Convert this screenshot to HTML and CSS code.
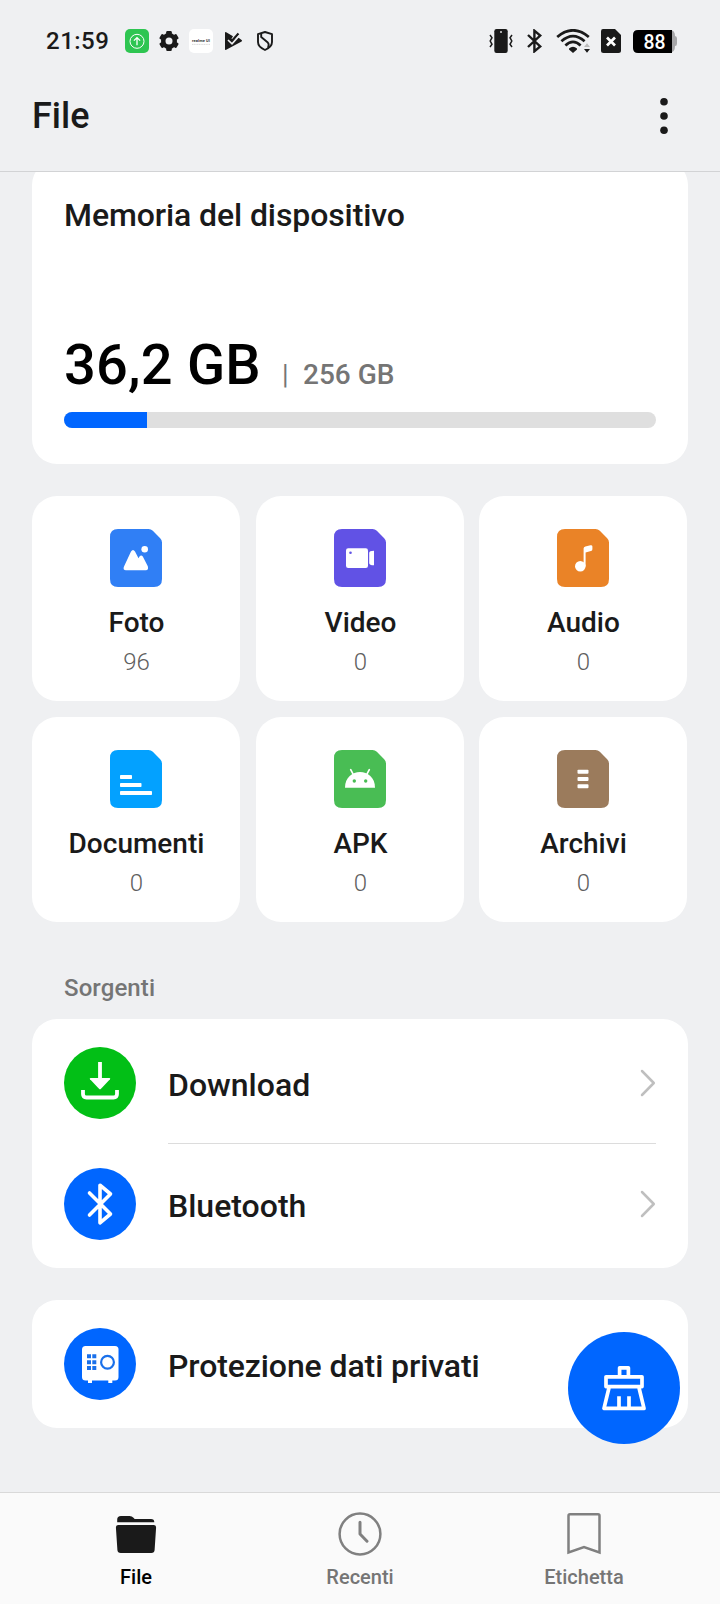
FILE: index.html
```html
<!DOCTYPE html>
<html lang="it">
<head>
<meta charset="utf-8">
<title>File</title>
<link rel="stylesheet" href="styles.css">
</head>
<body>
<div class="app">
  <header class="header">
    <div class="status">
      <span class="time">21:59</span>
      <svg class="ic" viewBox="0 0 24 24"><rect width="24" height="24" rx="5" fill="#2ec551"/><g fill="none" stroke="#fff"><circle cx="12" cy="12.3" r="7" stroke-width="1"/><path d="M12 16.3V9M8.9 11.6 12 8.6l3.1 3" stroke-width="1.3"/></g></svg>
      <svg class="ic" viewBox="0 0 24 24"><g fill="#1a1a1a"><circle cx="12" cy="12" r="8"/><rect x="9.2" y="2.1" width="5.6" height="19.8" rx="1.2"/><rect x="9.2" y="2.1" width="5.6" height="19.8" rx="1.2" transform="rotate(60 12 12)"/><rect x="9.2" y="2.1" width="5.6" height="19.8" rx="1.2" transform="rotate(120 12 12)"/></g><circle cx="12" cy="12" r="3.5" fill="#eff0f2"/></svg>
      <svg class="ic" viewBox="0 0 24 24"><rect width="24" height="24" rx="5" fill="#fff"/><text x="3" y="13.2" class="brand" textLength="18">realme UI</text><path d="M3 15.4h18" stroke="#ccc" stroke-width=".7" stroke-dasharray="1.2 .5"/></svg>
      <svg class="ic" viewBox="0 0 24 24"><path d="M4 4q0-1.300 1.200-.7L12 7.200l-1.500 2.600L12 11l5.300-2.600 3.300 2.500q1 .9 0 1.700L5.200 20.800Q4 21.400 4 20z" fill="#1a1a1a"/><path d="m10.800 12 6.700-7.600" fill="none" stroke="#1a1a1a" stroke-width="2.200"/><path d="m7 11 4 3.800 8-8.800" fill="none" stroke="#eff0f2" stroke-width="1.700"/></svg>
      <svg class="ic" viewBox="0 0 24 24"><g fill="none" stroke="#1a1a1a" stroke-width="1.9" stroke-linejoin="round"><path d="M12 3 19 5.2V13q0 4.800-7 8-7-3.200-7-8V5.2z"/><path d="M8.2 4.500V8l6.600 5.500q1.700 2 .2 5.400"/></g></svg>
      <span class="spacer"></span>
      <svg class="ic" viewBox="0 0 24 24"><rect x="5.300" width="13.400" height="24" rx="2.200" fill="#1a1a1a"/><rect x="11" y="2" width="2" height="2" fill="#aaa"/><path d="m1 6 2 2.700L1.200 12 3 15.300l-2 2.700M23 6l-2 2.700 1.800 3.300-1.800 3.300 2 2.700" fill="none" stroke="#1a1a1a" stroke-width="1.500"/></svg>
      <svg class="ic bt" viewBox="0 0 24 24"><path d="m6 6 12.200 11.500L12.400 22.300V1.700l5.800 4.800L6 18" fill="none" stroke="#1a1a1a" stroke-width="2.400"/></svg>
      <svg class="ic wifi" viewBox="0 0 36 24"><g fill="none" stroke="#1a1a1a" stroke-width="2.700"><path d="M1.200 8Q17 -5.400 32.800 8"/><path d="M5.400 12.300Q17 2 28.600 12.300"/><path d="M9.400 16.400Q17 9.200 24.600 16.400"/></g><path d="M13 19.400q4-3.400 8 0v1.200L17 24l-4-3.400z" fill="#1a1a1a"/><path d="m28 18 3-3.700 3 3.700z" fill="#bbb"/><path d="M28 20h6l-3 3.700z" fill="#1a1a1a"/></svg>
      <svg class="ic sim" viewBox="0 0 24 24"><path d="M4 0h12l6 6v15.500Q22 24 19.500 24h-15Q2 24 2 21.500V2.300Q2 0 4 0z" fill="#1a1a1a"/><path d="m8 8.500 8 8m0-8-8 8" stroke="#fff" stroke-width="2.700"/></svg>
      <svg class="battery" viewBox="0 0 44 24"><path d="M36 1h1q5 0 5 6 2 0 2 2.500v5Q44 17 42 17q0 6.500-5 6.500h-1z" fill="#a6a6a8"/><path d="M5 1h34v23H5q-5 0-5-5V6q0-5 5-5z" fill="#000"/><text x="10.500" y="19.800" class="charge" textLength="22" lengthAdjust="spacingAndGlyphs">88</text></svg>
    </div>
    <div class="titlebar">
      <h1>File</h1>
      <svg class="more" viewBox="0 0 8 38"><g fill="#1a1a1a"><circle cx="4" cy="4.700" r="3.800"/><circle cx="4" cy="19" r="3.800"/><circle cx="4" cy="33.300" r="3.800"/></g></svg>
    </div>
  </header>

  <main class="content">
    <section class="card storage">
      <h2>Memoria del dispositivo</h2>
      <div class="size"><strong>36,2 GB</strong><span class="bar-sep">|</span><span class="total">256 GB</span></div>
      <div class="meter"><div class="used"></div></div>
    </section>

    <section class="grid">
      <div class="card tile"><svg class="doc photo" viewBox="0 0 52 58"><path d="M8 0h30.500q2.500 0 4.300 1.800l7.400 7.400Q52 11 52 13.500V50q0 8-8 8H8q-8 0-8-8V8q0-8 8-8z"/><g fill="#fff"><circle cx="34.700" cy="20.300" r="3.300"/><path d="M14 37.500 21 22.600q2-3.300 4 0l3.500 6.600 1-1.700q1.700-2 3.300 0l5 9.800q1 4-2 4H16q-3.500-.2-2-3.800z"/></g></svg><b>Foto</b><span>96</span></div>
      <div class="card tile"><svg class="doc video" viewBox="0 0 52 58"><path d="M8 0h30.500q2.500 0 4.300 1.800l7.400 7.400Q52 11 52 13.500V50q0 8-8 8H8q-8 0-8-8V8q0-8 8-8z"/><rect x="12" y="19.300" width="22" height="19.700" rx="2.200" fill="#fff"/><circle cx="16.500" cy="23.800" r="1.300"/><path d="M35.200 24q0-2.300 4.800-2.300v14.600q-4.800 0-4.800-2.300z" fill="#fff"/></svg><b>Video</b><span>0</span></div>
      <div class="card tile"><svg class="doc audio" viewBox="0 0 52 58"><path d="M8 0h30.500q2.500 0 4.300 1.800l7.400 7.400Q52 11 52 13.500V50q0 8-8 8H8q-8 0-8-8V8q0-8 8-8z"/><g fill="#fff"><circle cx="23.300" cy="37.300" r="5.300"/><path d="M26.600 37V19.600q0-1.800 1.800-2.200l5-1.200q2-.3 2 1.300v2.700q0 1.500-1.500 1.900l-5.300 1.300V37z"/></g></svg><b>Audio</b><span>0</span></div>
      <div class="card tile"><svg class="doc text" viewBox="0 0 52 58"><path d="M8 0h30.500q2.500 0 4.300 1.800l7.400 7.400Q52 11 52 13.500V50q0 8-8 8H8q-8 0-8-8V8q0-8 8-8z"/><g fill="#fff"><rect x="10" y="25" width="12" height="4" rx=".8"/><rect x="10" y="33" width="21.500" height="4" rx=".8"/><rect x="10" y="41" width="32" height="4" rx=".8"/></g></svg><b>Documenti</b><span>0</span></div>
      <div class="card tile"><svg class="doc apk" viewBox="0 0 52 58"><path d="M8 0h30.500q2.500 0 4.300 1.800l7.400 7.400Q52 11 52 13.500V50q0 8-8 8H8q-8 0-8-8V8q0-8 8-8z"/><path d="M11 37.700C11 16.700 41 16.700 41 37.700z" fill="#fff"/><path d="m16.700 19.700 2.500 4.600m16.100-4.600-2.500 4.600" stroke="#fff" stroke-width="1.700" stroke-linecap="round"/><circle cx="20.300" cy="31" r="1.700"/><circle cx="31.700" cy="31" r="1.700"/></svg><b>APK</b><span>0</span></div>
      <div class="card tile"><svg class="doc zip" viewBox="0 0 52 58"><path d="M8 0h30.500q2.500 0 4.300 1.800l7.400 7.400Q52 11 52 13.500V50q0 8-8 8H8q-8 0-8-8V8q0-8 8-8z"/><g fill="#fff"><rect x="20.500" y="19.700" width="11" height="4" rx=".9"/><rect x="20.500" y="27" width="11" height="4" rx=".9"/><rect x="20.500" y="34.200" width="11" height="4" rx=".9"/></g></svg><b>Archivi</b><span>0</span></div>
    </section>

    <h3>Sorgenti</h3>
    <section class="card list">
      <div class="row">
        <svg class="round" viewBox="0 0 72 72"><circle cx="36" cy="36" r="36" fill="#02bf16"/><path d="M36 15v21M19 43v4q0 3.500 3.500 3.500h27q3.500 0 3.500-3.500v-4" fill="none" stroke="#fff" stroke-width="3.800"/><path d="M26.500 31h19q1.300.3.500 1.300l-9 9.500q-1 1-2 0l-9-9.500q-.8-1 .5-1.300z" fill="#fff"/></svg>
        <span class="name">Download</span>
        <svg class="chev" viewBox="0 0 16 28"><path d="M2 2l11.800 12L2 26" /></svg>
      </div>
      <div class="row">
        <svg class="round" viewBox="0 0 72 72"><circle cx="36" cy="36" r="36" fill="#06f"/><path d="M25.500 25 46.500 46 36 54.800V17.200L46.500 26l-21 21" fill="none" stroke="#fff" stroke-width="3.600" stroke-linejoin="round" stroke-linecap="round"/></svg>
        <span class="name">Bluetooth</span>
        <svg class="chev" viewBox="0 0 16 28"><path d="M2 2l11.800 12L2 26" /></svg>
      </div>
    </section>

    <section class="card private">
      <div class="row">
        <svg class="round" viewBox="0 0 72 72"><circle cx="36" cy="36" r="36" fill="#06f"/><rect x="18" y="18" width="36.500" height="34.500" rx="3.500" fill="#fff"/><path d="M24 51h4v4h-4zM44.300 51h4v4h-4z" fill="#fff"/><path d="M23 26.300h4v4h-4zm5.300 0h4v4h-4zM23 32.200h4v4h-4zm5.300 0h4v4h-4zM23 38h4v4h-4zm5.300 0h4v4h-4z" fill="#1a70ea"/><circle cx="43.500" cy="34.200" r="6.400" fill="none" stroke="#1a70ea" stroke-width="2.200"/></svg>
        <span class="name long">Protezione dati privati</span>
      </div>
    </section>
  </main>

  <nav class="nav">
    <a class="tab active"><svg viewBox="0 0 44 44"><g fill="#1a1a1a"><path d="M3.200 10.300V7.600Q3.200 4 7 4h8.500q2.500 0 4 1.700L20.700 7H37q3.300 0 3.300 3.300z"/><path d="M4 13h36q2.300.2 2.100 2.500L40.600 38q-.2 3-3.300 3H6.700q-3.100 0-3.300-3L1.900 15.500Q1.700 13.200 4 13z"/></g></svg><span>File</span></a>
    <a class="tab"><svg viewBox="0 0 44 44"><g fill="none" stroke="#808080"><circle cx="22" cy="22" r="20.400" stroke-width="2.500"/><path d="M22 10.300V22l7 7.200" stroke-width="3" stroke-linejoin="round" stroke-linecap="round"/></g></svg><span>Recenti</span></a>
    <a class="tab"><svg viewBox="0 0 44 44"><path d="M6.500 40.500V3.800Q6.500 2.300 8 2.300h28q1.500 0 1.500 1.500v36.700L22 35z" fill="none" stroke="#808080" stroke-width="2.500"/></svg><span>Etichetta</span></a>
  </nav>

  <button class="fab" aria-label="Pulizia"><svg viewBox="0 0 44 46"><g fill="none" stroke="#fff" stroke-width="3.700" stroke-linejoin="round"><path d="M17.600 10.500V2.800h8.800v7.700"/><path d="M4 11.800h36v9.800H4z"/><path d="M7 22.800 2 43.400h40L37 22.800M17 43V31.200M27 43V31.200"/></g></svg></button>
</div>
</body>
</html>
```

FILE: styles.css
```css
* { box-sizing: border-box; }
body { margin: 0; font-family: Roboto, sans-serif; background: #eff0f2; color: #1a1a1a; }
h1, h2, h3 { margin: 0; font-weight: 500; }
svg { display: block; flex: none; }
.app { position: relative; display: flex; flex-direction: column; width: 720px; height: 1604px; overflow: hidden; }

.header { flex: none; height: 172px; border-bottom: 1px solid #d2d3d5; }
.status { display: flex; align-items: center; gap: 8px; height: 82px; padding: 0 43px 0 46px; }
.time { width: 71px; font-size: 24px; font-weight: 500; letter-spacing: .5px; }
.ic { width: 24px; height: 24px; }
.spacer { flex: 1; }
.ic.bt { margin-left: 1px; }
.ic.wifi { width: 36px; margin-left: 2px; }
.ic.sim { margin-left: -1px; }
.battery { width: 44px; height: 24px; margin-left: 2px; }
.brand { font-size: 4px; font-weight: 700; fill: #333; }
.charge { font-size: 20px; font-weight: 500; fill: #fff; }
.titlebar { display: flex; align-items: center; justify-content: space-between; height: 68px; padding: 0 52px 0 32px; }
.titlebar h1 { font-size: 36px; }
.more { width: 8px; height: 38px; }

.content { flex: 1; min-height: 0; overflow: hidden; padding: 0 32px; }
.card { background: #fff; border-radius: 25px; }

.storage { display: flex; flex-direction: column; height: 304px; margin-top: -12px; padding: 35px 32px 36px; }
.storage h2 { font-size: 32px; line-height: 40px; letter-spacing: -.1px; }
.size { display: flex; align-items: baseline; margin-top: auto; line-height: 66px; color: #757575; }
.size strong { width: 218px; font-size: 56px; font-weight: 500; letter-spacing: .2px; color: #000; }
.bar-sep { width: 21px; font-size: 27px; line-height: 30px; }
.total { font-size: 28px; font-weight: 500; line-height: 32px; }
.meter { height: 16px; margin-top: 14px; border-radius: 8px; background: #dfdfdf; overflow: hidden; }
.used { width: 14.05%; height: 100%; background: #06f; }

.grid { display: grid; grid-template-columns: repeat(3, 208px); grid-auto-rows: 205px; gap: 16px; margin-top: 32px; }
.tile { display: flex; flex-direction: column; align-items: center; padding-top: 33px; }
.tile:nth-child(3n) { margin: 0 1px 0 -1px; }
.tile b { margin-top: 17px; padding-left: 1px; font-size: 28px; font-weight: 500; line-height: 38px; }
.tile span { margin-top: 4px; padding-left: 1px; font-size: 24px; font-weight: 300; line-height: 32px; color: #606060; }
.doc { width: 52px; height: 58px; }
.photo { fill: #307ff5; }
.video { fill: #6152e5; }
.audio { fill: #ea8327; }
.text { fill: #03a1ff; }
.apk { fill: #49bd54; }
.zip { fill: #9b7b5c; }

h3 { margin-top: 50px; padding-left: 32px; font-size: 24px; line-height: 32px; letter-spacing: .1px; color: #757575; }
.list { height: 249px; margin-top: 15px; padding: 3px 32px 0; }
.row { position: relative; display: flex; align-items: center; height: 121px; }
.row + .row::before { content: ""; position: absolute; top: 0; left: 104px; right: 0; height: 1px; background: #dcdcdc; }
.round { width: 72px; height: 72px; margin-right: 32px; }
.name { flex: 1; padding-top: 4px; font-size: 32px; font-weight: 500; }
.name.long { letter-spacing: -.1px; }
.chev { width: 16px; height: 28px; fill: none; stroke: #bfbfbf; stroke-width: 2.500px; stroke-linecap: round; stroke-linejoin: round; }
.private { height: 128px; margin-top: 32px; padding: 3px 32px 0; }

.nav { flex: none; display: flex; height: 112px; padding: 0 24px; background: #fafafa; border-top: 1px solid #d9d9d9; }
.tab { flex: 1; display: flex; flex-direction: column; align-items: center; padding-top: 19px; font-size: 20px; font-weight: 500; line-height: 24px; color: #757575; }
.tab svg { width: 44px; height: 44px; margin-bottom: 9px; }
.tab.active { color: #000; }

/* Floating clean-up action above the list */
.fab { position: absolute; right: 40px; bottom: 160px; width: 112px; height: 112px; padding: 0; display: flex; align-items: center; justify-content: center; border: 0; border-radius: 50%; background: #06f; }
.fab svg { width: 44px; height: 46px; }
```
